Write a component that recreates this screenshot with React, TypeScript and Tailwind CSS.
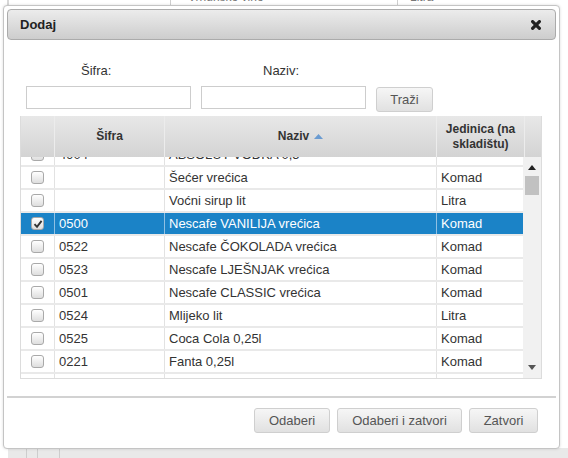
import React from 'react';

type Row = { code: string; name: string; unit: string; selected?: boolean };

const rows: Row[] = [
  { code: '4904', name: 'ABSOLUT VODKA 0,5', unit: '' },
  { code: '', name: 'Šećer vrećica', unit: 'Komad' },
  { code: '', name: 'Voćni sirup lit', unit: 'Litra' },
  { code: '0500', name: 'Nescafe VANILIJA vrećica', unit: 'Komad', selected: true },
  { code: '0522', name: 'Nescafe ČOKOLADA vrećica', unit: 'Komad' },
  { code: '0523', name: 'Nescafe LJEŠNJAK vrećica', unit: 'Komad' },
  { code: '0501', name: 'Nescafe CLASSIC vrećica', unit: 'Komad' },
  { code: '0524', name: 'Mlijeko lit', unit: 'Litra' },
  { code: '0525', name: 'Coca Cola 0,25l', unit: 'Komad' },
  { code: '0221', name: 'Fanta 0,25l', unit: 'Komad' },
  { code: '0222', name: 'Sprite 0,25l', unit: 'Komad' },
];

function Checkbox({ checked }: { checked?: boolean }) {
  return (
    <div className="w-[13px] h-[13px] rounded-[3px] border border-[#a9a9a9] bg-gradient-to-b from-[#ffffff] to-[#dedede] flex items-center justify-center">
      {checked && (
        <svg width="10" height="10" viewBox="0 0 10 10">
          <path d="M1.5 5.2 L4 7.8 L8.6 1.8" fill="none" stroke="#333" strokeWidth="1.9" />
        </svg>
      )}
    </div>
  );
}

function Button({ label, className = '' }: { label: string; className?: string }) {
  return (
    <button className={`h-[25px] rounded-[3px] border border-[#cfcfcf] bg-gradient-to-b from-[#f6f6f6] to-[#e1e1e1] text-[13px] text-[#555] ${className}`}>
      {label}
    </button>
  );
}

export default function App() {
  return (
    <div className="relative w-[568px] h-[458px] bg-white overflow-hidden font-['Liberation_Sans',Arial,sans-serif]">
      {/* page behind the dialog */}
      <div className="flex flex-col h-full">
        <div className="h-[6px] flex text-[12px] text-[#777] leading-[14px] overflow-hidden">
          <div className="w-[7px]" />
          <div className="w-[2px] bg-[#d8d8d8]" />
          <div className="w-[161px]" />
          <div className="w-px bg-[#cfcfcf]" />
          <div className="w-[226px] pl-[17px] -mt-[10px]">Vrhunsko vino</div>
          <div className="w-px bg-[#cfcfcf]" />
          <div className="pl-[12px] -mt-[10px]">Litra</div>
        </div>
        <div className="flex-1" />
        <div className="h-[10px] flex bg-[#e9e9e9] ml-[8px]">
          <div className="w-[19px] border-r border-[#cdcdcd]" />
          <div className="w-[11px] border-r border-[#cdcdcd]" />
          <div className="w-[22px] border-r border-[#cdcdcd]" />
        </div>
      </div>

      {/* dialog */}
      <div className="absolute left-[3px] top-[5px] w-[557px] h-[444px] bg-white border border-[#c4c4c4] rounded-[4px] shadow-[0_0_3px_rgba(0,0,0,0.15)] p-[3px] flex flex-col">
        <div className="h-[31px] shrink-0 rounded-[4px] border border-[#ababab] bg-gradient-to-b from-[#ececec] to-[#cdcdcd] flex items-center justify-between pl-[12px] pr-[14px]">
          <span className="text-[13px] font-bold text-[#222]">Dodaj</span>
          <svg width="10" height="10" viewBox="0 0 10 10">
            <path d="M1.6 1.6 L8.4 8.4 M8.4 1.6 L1.6 8.4" stroke="#222" strokeWidth="3.2" strokeLinecap="round" />
          </svg>
        </div>

        {/* search form */}
        <div className="mt-[23px] ml-[19px] flex text-[13px] text-[#333] leading-[15px]">
          <span className="ml-[55px] w-[182px]">Šifra:</span>
          <span>Naziv:</span>
        </div>
        <div className="mt-[8px] ml-[19px] flex gap-[10px]">
          <input className="w-[165px] h-[23px] border border-[#cdcdcd] bg-white outline-none" />
          <input className="w-[165px] h-[23px] border border-[#cdcdcd] bg-white outline-none" />
          <Button label="Traži" className="w-[57px] h-[22px] mt-px" />
        </div>

        {/* grid */}
        <div className="mt-[4px] ml-[13px] w-[522px] border border-[#dcdcdc] border-t-0">
          <div className="h-[41px] grid grid-cols-[34px_110px_272px_88px_18px] bg-gradient-to-b from-[#e8e8e8] to-[#d3d3d3] text-[12px] font-bold text-[#333] leading-[15px]">
            <div className="border-r border-[#ececec]" />
            <div className="border-r border-[#ececec] flex items-center justify-center">Šifra</div>
            <div className="border-r border-[#ececec] flex items-center justify-center gap-[5px]">
              Naziv
              <svg width="9" height="5" viewBox="0 0 9 5">
                <path d="M0 5 L4.5 0 L9 5 Z" fill="#6a9bd1" />
              </svg>
            </div>
            <div className="border-r border-[#ececec] flex items-center justify-center text-center">
              Jedinica (na<br />skladištu)
            </div>
            <div />
          </div>
          <div className="flex h-[221px]">
            <div className="w-[504px] overflow-hidden">
              <div className="-mt-[13px]">
                {rows.map((r, i) => (
                  <div
                    key={i}
                    className={`h-[23px] grid grid-cols-[34px_110px_272px_88px] border-b-2 border-[#e9e9e9] text-[13px] leading-[15px] ${
                      r.selected ? 'bg-[#1b83c7] text-white' : 'text-[#333]'
                    }`}
                  >
                    <div className={`border-r flex items-center justify-center ${r.selected ? 'border-[#8fc0e3]' : 'border-[#e2e2e2]'}`}>
                      <Checkbox checked={r.selected} />
                    </div>
                    <div className={`border-r flex items-center pl-[4px] ${r.selected ? 'border-[#8fc0e3]' : 'border-[#e2e2e2]'}`}>{r.code}</div>
                    <div className={`border-r flex items-center pl-[4px] ${r.selected ? 'border-[#8fc0e3]' : 'border-[#e2e2e2]'}`}>{r.name}</div>
                    <div className="flex items-center pl-[4px]">{r.unit}</div>
                  </div>
                ))}
              </div>
            </div>
            {/* scrollbar */}
            <div className="w-[18px] bg-[#f1f1f1] flex flex-col items-center">
              <svg width="8" height="5" viewBox="0 0 8 5" className="mt-[8px]">
                <path d="M0 5 L4 0 L8 5 Z" fill="#222" />
              </svg>
              <div className="mt-[6px] w-[14px] h-[19px] bg-[#c1c1c1]" />
              <div className="flex-1" />
              <svg width="8" height="5" viewBox="0 0 8 5" className="mb-[8px]">
                <path d="M0 0 L8 0 L4 5 Z" fill="#555" />
              </svg>
            </div>
          </div>
        </div>

        <div className="mt-[17px] h-[2px] bg-[#d2d2d2]" />

        <div className="mt-[10px] flex justify-end gap-[7px] pr-[18px]">
          <Button label="Odaberi" className="w-[76px]" />
          <Button label="Odaberi i zatvori" className="w-[125px]" />
          <Button label="Zatvori" className="w-[69px]" />
        </div>
      </div>
    </div>
  );
}
